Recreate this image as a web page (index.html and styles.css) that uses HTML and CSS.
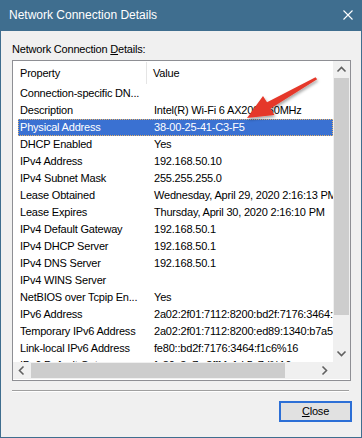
FILE: index.html
```html
<!DOCTYPE html>
<html lang="en">
<head>
<meta charset="utf-8">
<title>Network Connection Details</title>
<link rel="stylesheet" href="styles.css">
</head>
<body>
<div class="window">
  <div class="titlebar">
    <span class="title">Network Connection Details</span>
    <svg class="close-x" width="12" height="12" viewBox="0 0 12 12"><path d="M1.5 1.5 L10.5 10.5 M10.5 1.5 L1.5 10.5" stroke="#fff" stroke-width="1.1" fill="none"/></svg>
  </div>
  <div class="content">
    <div class="label">Network Connection <u>D</u>etails:</div>
    <div class="listbox">
      <div class="list">
        <div class="header">
          <div class="hcell hcell-prop">Property</div>
          <div class="hcell hcell-val">Value</div>
        </div>
        <div class="rows">
          <div class="row"><span class="c1">Connection-specific DN...</span><span class="c2"></span></div>
          <div class="row"><span class="c1">Description</span><span class="c2">Intel(R) Wi-Fi 6 AX200 160MHz</span></div>
          <div class="row selected"><span class="c1">Physical Address</span><span class="c2">38-00-25-41-C3-F5</span></div>
          <div class="row"><span class="c1">DHCP Enabled</span><span class="c2">Yes</span></div>
          <div class="row"><span class="c1">IPv4 Address</span><span class="c2">192.168.50.10</span></div>
          <div class="row"><span class="c1">IPv4 Subnet Mask</span><span class="c2">255.255.255.0</span></div>
          <div class="row"><span class="c1">Lease Obtained</span><span class="c2">Wednesday, April 29, 2020 2:16:13 PM</span></div>
          <div class="row"><span class="c1">Lease Expires</span><span class="c2">Thursday, April 30, 2020 2:16:10 PM</span></div>
          <div class="row"><span class="c1">IPv4 Default Gateway</span><span class="c2">192.168.50.1</span></div>
          <div class="row"><span class="c1">IPv4 DHCP Server</span><span class="c2">192.168.50.1</span></div>
          <div class="row"><span class="c1">IPv4 DNS Server</span><span class="c2">192.168.50.1</span></div>
          <div class="row"><span class="c1">IPv4 WINS Server</span><span class="c2"></span></div>
          <div class="row"><span class="c1">NetBIOS over Tcpip En...</span><span class="c2">Yes</span></div>
          <div class="row"><span class="c1">IPv6 Address</span><span class="c2">2a02:2f01:7112:8200:bd2f:7176:3464:f1c6</span></div>
          <div class="row"><span class="c1">Temporary IPv6 Address</span><span class="c2">2a02:2f01:7112:8200:ed89:1340:b7a5:1d2e</span></div>
          <div class="row"><span class="c1">Link-local IPv6 Address</span><span class="c2">fe80::bd2f:7176:3464:f1c6%16</span></div>
          <div class="row"><span class="c1">IPv6 Default Gateway</span><span class="c2">fe80::3e7c:3fff:fe1d:5c7d%16</span></div>
        </div>
      </div>
      <div class="vscroll">
        <div class="sbtn"><svg width="17" height="17" viewBox="0 0 17 17"><polyline points="4.5,10.5 8.5,6.5 12.5,10.5" fill="none" stroke="#606060" stroke-width="1.6"/></svg></div>
        <div class="vtrack"><div class="vthumb"></div></div>
        <div class="sbtn"><svg width="17" height="17" viewBox="0 0 17 17"><polyline points="4.5,6.5 8.5,10.5 12.5,6.5" fill="none" stroke="#606060" stroke-width="1.6"/></svg></div>
      </div>
      <div class="hscroll">
        <div class="sbtn"><svg width="17" height="17" viewBox="0 0 17 17"><polyline points="10.5,4.5 6.5,8.5 10.5,12.5" fill="none" stroke="#606060" stroke-width="1.6"/></svg></div>
        <div class="htrack"><div class="hthumb"></div></div>
        <div class="sbtn"><svg width="17" height="17" viewBox="0 0 17 17"><polyline points="6.5,4.5 10.5,8.5 6.5,12.5" fill="none" stroke="#606060" stroke-width="1.6"/></svg></div>
      </div>
      <div class="corner"></div>
    </div>
    <div class="separator"></div>
    <div class="actions">
      <button class="btn"><u>C</u>lose</button>
    </div>
  </div>
  <svg class="annotation" width="362" height="438" viewBox="0 0 362 438">
    <defs>
      <filter id="shadow" x="-20%" y="-20%" width="140%" height="140%">
        <feDropShadow dx="1" dy="2" stdDeviation="1.8" flood-color="#000" flood-opacity="0.35"/>
      </filter>
    </defs>
    <polygon filter="url(#shadow)" fill="#e5392a" points="247,118 263,96 267,102.3 315.5,77.2 317.2,79.3 270.6,108.6 274.5,115"/>
  </svg>
</div>
</body>
</html>
```
FILE: styles.css
```css
* { box-sizing: border-box; }
html, body { margin: 0; padding: 0; }
body {
  width: 362px;
  height: 438px;
  font-family: "Liberation Sans", Arial, sans-serif;
  background: #f0f0f0;
}
.window {
  position: relative;
  width: 362px;
  height: 438px;
  background: #f0f0f0;
  border: 1px solid #3f6e8f;
  border-top: none;
  display: flex;
  flex-direction: column;
}
.titlebar {
  height: 31px;
  background: #3f6e8f;
  display: flex;
  align-items: center;
  justify-content: space-between;
  padding: 0 8px 1px 9px;
  margin: 0 -1px;
}
.title {
  color: #fff;
  font-size: 12px;
  line-height: 16px;
}
.close-x { display: block; margin-top: -1px; }
.content {
  padding: 11px 10px 0 11px;
  display: flex;
  flex-direction: column;
  font-size: 11px;
  letter-spacing: -0.2px;
  color: #000;
}
.label {
  line-height: 14px;
  height: 14px;
}
.listbox {
  margin-top: 4px;
  width: 339px;
  height: 321px;
  border: 1px solid #8e8f94;
  background: #fff;
  display: grid;
  grid-template-columns: 320px 17px;
  grid-template-rows: 301px 17px;
}
.list {
  overflow: hidden;
  display: flex;
  flex-direction: column;
}
.header {
  height: 24px;
  flex: none;
  display: flex;
  align-items: stretch;
}
.hcell {
  line-height: 24px;
}
.hcell-prop {
  width: 134px;
  padding-left: 7px;
  border-right: 1px solid #e5e5e5;
  margin: 1px 0 1px 0;
  line-height: 22px;
}
.hcell-val {
  padding-left: 6px;
}
.rows {
  overflow: hidden;
  flex: 1;
}
.row {
  height: 17px;
  line-height: 17px;
  margin-left: 5px;
  padding-left: 2px;
  display: flex;
  white-space: nowrap;
}
.row .c1 {
  width: 134px;
  flex: none;
  overflow: hidden;
}
.row .c2 { flex: none; }
.row.selected {
  background: #3a71d2;
  color: #fff;
  outline: 1px dotted #e6b36a;
  outline-offset: -1px;
}
.vscroll {
  background: #f0f0f0;
  display: flex;
  flex-direction: column;
}
.sbtn {
  width: 17px;
  height: 17px;
  flex: none;
}
.sbtn svg { display: block; }
.vtrack {
  flex: 1;
  padding: 0 1px;
}
.vthumb {
  height: 237px;
  background: #cdcdcd;
}
.hscroll {
  background: #f0f0f0;
  display: flex;
}
.htrack {
  flex: 1;
  padding: 1px 0 1px 1px;
}
.hthumb {
  width: 254px;
  height: 100%;
  background: #cdcdcd;
}
.corner { background: #f0f0f0; }
.separator {
  margin-top: 9px;
  width: 337px;
  height: 2px;
  border-top: 1px solid #a0a0a0;
  border-bottom: 1px solid #ffffff;
}
.actions {
  display: flex;
  justify-content: flex-end;
  margin-top: 9px;
}
.btn {
  width: 73px;
  height: 21px;
  margin-right: -1px;
  border: 2px solid #2c6fd6;
  background: #e1e1e1;
  font-family: "Liberation Sans", Arial, sans-serif;
  font-size: 11px;
  letter-spacing: -0.2px;
  color: #000;
  padding: 0;
  line-height: 17px;
}
.annotation {
  position: absolute;
  left: -1px;
  top: 0;
  pointer-events: none;
}
```
